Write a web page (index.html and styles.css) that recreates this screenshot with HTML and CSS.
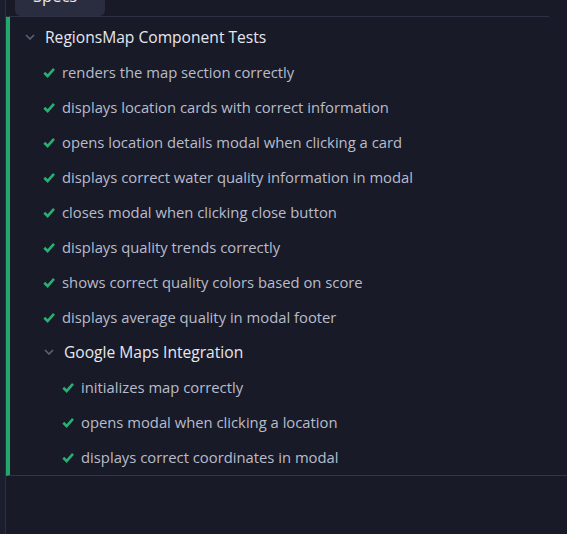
FILE: index.html
```html
<!DOCTYPE html>
<html>
<head>
<meta charset="utf-8">
<link rel="stylesheet" href="styles.css">
</head>
<body>
<div class="app">
  <div class="rail"></div>
  <div class="main">
    <div class="tabbar">
      <div class="tab">Specs</div>
    </div>
    <div class="suite">
      <div class="row head lvl0">
        <svg class="chev" viewBox="0 0 10 6" width="10" height="6"><path d="M1 1 L5 5 L9 1" fill="none" stroke="#5d6172" stroke-width="1.6"/></svg>
        <span class="title">RegionsMap Component Tests</span>
      </div>
      <div class="row test lvl1"><svg class="check" viewBox="0 0 12 11" width="12" height="11"><path d="M1.3 5.8 L4.6 9 L11 1.8" fill="none" stroke="#27b072" stroke-width="2.6"/></svg><span>renders the map section correctly</span></div>
      <div class="row test lvl1"><svg class="check" viewBox="0 0 12 11" width="12" height="11"><path d="M1.3 5.8 L4.6 9 L11 1.8" fill="none" stroke="#27b072" stroke-width="2.6"/></svg><span>displays location cards with correct information</span></div>
      <div class="row test lvl1"><svg class="check" viewBox="0 0 12 11" width="12" height="11"><path d="M1.3 5.8 L4.6 9 L11 1.8" fill="none" stroke="#27b072" stroke-width="2.6"/></svg><span>opens location details modal when clicking a card</span></div>
      <div class="row test lvl1"><svg class="check" viewBox="0 0 12 11" width="12" height="11"><path d="M1.3 5.8 L4.6 9 L11 1.8" fill="none" stroke="#27b072" stroke-width="2.6"/></svg><span>displays correct water quality information in modal</span></div>
      <div class="row test lvl1"><svg class="check" viewBox="0 0 12 11" width="12" height="11"><path d="M1.3 5.8 L4.6 9 L11 1.8" fill="none" stroke="#27b072" stroke-width="2.6"/></svg><span>closes modal when clicking close button</span></div>
      <div class="row test lvl1"><svg class="check" viewBox="0 0 12 11" width="12" height="11"><path d="M1.3 5.8 L4.6 9 L11 1.8" fill="none" stroke="#27b072" stroke-width="2.6"/></svg><span>displays quality trends correctly</span></div>
      <div class="row test lvl1"><svg class="check" viewBox="0 0 12 11" width="12" height="11"><path d="M1.3 5.8 L4.6 9 L11 1.8" fill="none" stroke="#27b072" stroke-width="2.6"/></svg><span>shows correct quality colors based on score</span></div>
      <div class="row test lvl1"><svg class="check" viewBox="0 0 12 11" width="12" height="11"><path d="M1.3 5.8 L4.6 9 L11 1.8" fill="none" stroke="#27b072" stroke-width="2.6"/></svg><span>displays average quality in modal footer</span></div>
      <div class="row head lvl1h">
        <svg class="chev" viewBox="0 0 10 6" width="10" height="6"><path d="M1 1 L5 5 L9 1" fill="none" stroke="#5d6172" stroke-width="1.6"/></svg>
        <span class="title">Google Maps Integration</span>
      </div>
      <div class="row test lvl2"><svg class="check" viewBox="0 0 12 11" width="12" height="11"><path d="M1.3 5.8 L4.6 9 L11 1.8" fill="none" stroke="#27b072" stroke-width="2.6"/></svg><span>initializes map correctly</span></div>
      <div class="row test lvl2"><svg class="check" viewBox="0 0 12 11" width="12" height="11"><path d="M1.3 5.8 L4.6 9 L11 1.8" fill="none" stroke="#27b072" stroke-width="2.6"/></svg><span>opens modal when clicking a location</span></div>
      <div class="row test lvl2"><svg class="check" viewBox="0 0 12 11" width="12" height="11"><path d="M1.3 5.8 L4.6 9 L11 1.8" fill="none" stroke="#27b072" stroke-width="2.6"/></svg><span>displays correct coordinates in modal</span></div>
    </div>
  </div>
</div>
</body>
</html>
```

FILE: styles.css
```css
html, body {
  margin: 0;
  padding: 0;
  height: 100%;
  background: #181a28;
  overflow: hidden;
}
body {
  font-family: "Open Sans", "Noto Sans", sans-serif;
  font-size: 14.8px;
}
.app {
  display: flex;
  height: 100%;
}
.rail {
  width: 5px;
  background: #1b1e2c;
  border-right: 1px solid #2c2f3f;
  flex: none;
}
.main {
  flex: 1;
  display: flex;
  flex-direction: column;
}
.tabbar {
  height: 16px;
  border-bottom: 1px solid #2e3144;
  margin-right: 18px;
  padding-left: 9px;
  overflow: hidden;
}
.tab {
  width: 90px;
  height: 40px;
  margin-top: -24px;
  background: #2a2d3f;
  border-radius: 0 0 6px 6px;
  color: #e8e8ef;
  font-size: 16.5px;
  line-height: 22px;
  box-sizing: border-box;
  padding: 9px 0 0 18px;
}
.suite {
  border-left: 4px solid #22a86c;
  border-bottom: 1px solid #33364a;
  padding-top: 2.5px;
}
.row {
  height: 35px;
  display: flex;
  align-items: center;
  white-space: nowrap;
}
.head .title {
  color: #e6e7ef;
  font-size: 15.6px;
}
.test span {
  color: #b8bccb;
}
.chev {
  flex: none;
  margin-right: 10px;
}
.check {
  flex: none;
  margin-right: 7px;
}
.lvl0 { padding-left: 15px; }
.lvl1 { padding-left: 33px; }
.lvl1h { padding-left: 34px; }
.lvl2 { padding-left: 52px; }
```
